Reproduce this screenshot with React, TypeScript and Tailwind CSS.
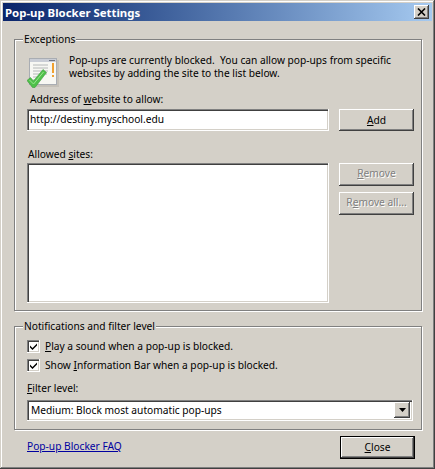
const raised = "bg-[#d4d0c8] shadow-[inset_-1px_-1px_0_#404040,inset_1px_1px_0_#ffffff,inset_-2px_-2px_0_#808080]";
const sunken = "bg-white shadow-[inset_1px_1px_0_#808080,inset_2px_2px_0_#404040,inset_-1px_-1px_0_#d4d0c8] border-r border-b border-white shrink-0";

function U({ children }: { children: string }) {
  return <span className="underline underline-offset-[1px]">{children}</span>;
}

function Group({ title, className, children }: { title: string; className: string; children: React.ReactNode }) {
  return (
    <div className={"relative border border-[#808080] shadow-[1px_1px_0_#ffffff,inset_1px_1px_0_#ffffff] pl-3 " + className}>
      <span className="absolute left-2 -top-[7px] bg-[#d4d0c8] px-[1px] leading-[13px]">{title}</span>
      {children}
    </div>
  );
}

function Btn({ children, disabled, className = "" }: { children: React.ReactNode; disabled?: boolean; className?: string }) {
  return (
    <div className={`${raised} w-[75px] shrink-0 flex items-center justify-center ${disabled ? "text-[#808080] [text-shadow:1px_1px_0_#ffffff]" : "text-black"} ${className}`}>
      {children}
    </div>
  );
}

function Check({ children }: { children: React.ReactNode }) {
  return (
    <div className="flex items-center h-[13px] gap-[5px]">
      <div className={`${sunken} w-[13px] h-[13px] flex items-center justify-center`}>
        <svg width="9" height="9" viewBox="0 0 9 9"><path d="M1 3.5 L3.5 6 L8 1.5 V3.5 L3.5 8 L1 5.5 Z" fill="#000" /></svg>
      </div>
      <span>{children}</span>
    </div>
  );
}

function Icon() {
  return (
    <svg width="32" height="32" viewBox="0 0 32 32" className="shrink-0">
      <rect x="4" y="3" width="28" height="27" fill="#b9b6ae" opacity="0.6" />
      <rect x="2.5" y="1.5" width="27" height="26" fill="#f7f7f3" stroke="#a9adb3" />
      <rect x="3" y="2" width="26" height="3" fill="#c9cdd6" />
      <rect x="22" y="3" width="6" height="1" fill="#6d7280" />
      <path d="M6 8h15M6 11h15M6 14h15M6 17h14M6 20h9M6 23h4" stroke="#b5b8b8" strokeWidth="1" />
      <rect x="25" y="6" width="2" height="10" fill="#f0a030" />
      <rect x="25" y="18" width="2" height="2" fill="#f0a030" />
      <path d="M0 23.5 L3.5 20.5 L6.5 24 L16 12.5 L19.5 15.5 L8 30.5 L5.5 30.5 Z" fill="#4fc04a" stroke="#3a9a3a" strokeWidth="0.6" />
      <path d="M2.5 23 L6.5 27 L16.5 15" fill="none" stroke="#9be88f" strokeWidth="1" />
    </svg>
  );
}

export default function App() {
  return (
    <div className="w-[435px] h-[469px] p-[3px] flex flex-col bg-[#d4d0c8] text-[10.2px] leading-[13px] text-black font-['Noto_Sans',sans-serif] shadow-[inset_-1px_-1px_0_#404040,inset_1px_1px_0_#d4d0c8,inset_-2px_-2px_0_#808080,inset_2px_2px_0_#ffffff] overflow-hidden">
      <div className="h-[18px] shrink-0 flex items-center justify-between pl-[2px] pr-[3px] bg-gradient-to-r from-[#0a246a] to-[#a6caf0]">
        <span className="text-white font-bold text-[11.4px]">Pop-up Blocker Settings</span>
        <div className={`${raised} w-[15px] h-[14px] flex items-center justify-center`}>
          <svg width="9" height="8" viewBox="0 0 9 8"><path d="M1 0.5 L8 7.5 M8 0.5 L1 7.5" stroke="#000" strokeWidth="1.6" /></svg>
        </div>
      </div>
      <div className="flex-1 flex flex-col pl-[11px] pr-[10px] pt-[18px]">
        <Group title="Exceptions" className="h-[272px] pt-[17px]">
          <div className="flex gap-[10px] h-[31px]">
            <Icon />
            <div className="-mt-[3px] whitespace-nowrap">
              Pop-ups are currently blocked.&nbsp; You can allow pop-ups from specific<br />
              websites by adding the site to the list below.
            </div>
          </div>
          <div className="mt-[5px] pl-[3px] h-[16px]">Address of <U>w</U>ebsite to allow:</div>
          <div className="flex gap-[10px] items-start">
            <div className={`${sunken} w-[302px] h-[22px] flex items-center pl-[3px]`}>http://destiny.myschool.edu</div>
            <Btn className="h-[22px]"><U>A</U>dd</Btn>
          </div>
          <div className="mt-[17px] pl-[1px] h-[15px]">Allowed <U>s</U>ites:</div>
          <div className="flex gap-[10px] items-start">
            <div className={`${sunken} w-[302px] h-[140px]`} />
            <div className="flex flex-col gap-[6px]">
              <Btn disabled className="h-[23px] pb-[2px]"><U>R</U>emove</Btn>
              <Btn disabled className="h-[23px] pb-[2px]">R<U>e</U>move all...</Btn>
            </div>
          </div>
        </Group>
        <Group title="Notifications and filter level" className="h-[104px] mt-[15px] pt-[13px]">
          <div className="flex flex-col gap-[6px]">
            <Check><U>P</U>lay a sound when a pop-up is blocked.</Check>
            <Check>Show <U>I</U>nformation Bar when a pop-up is blocked.</Check>
          </div>
          <div className="mt-[10px] h-[18px]"><U>F</U>ilter level:</div>
          <div className={`${sunken} w-[386px] h-[21px] flex items-center justify-between pl-[4px] pr-[2px]`}>
            <span>Medium: Block most automatic pop-ups</span>
            <div className={`${raised} w-[16px] h-[16px] flex items-center justify-center`}>
              <svg width="7" height="4" viewBox="0 0 7 4"><path d="M0 0 H7 L3.5 4 Z" fill="#000" /></svg>
            </div>
          </div>
        </Group>
        <div className="flex items-center justify-between mt-[6px] pl-[13px] pr-[7px]">
          <span className="text-[#0000a0] underline underline-offset-[1px] -mt-[2px]">Pop-up Blocker FAQ</span>
          <div className="border border-black shrink-0">
            <Btn className="h-[21px] !w-[73px]"><U>C</U>lose</Btn>
          </div>
        </div>
      </div>
    </div>
  );
}
